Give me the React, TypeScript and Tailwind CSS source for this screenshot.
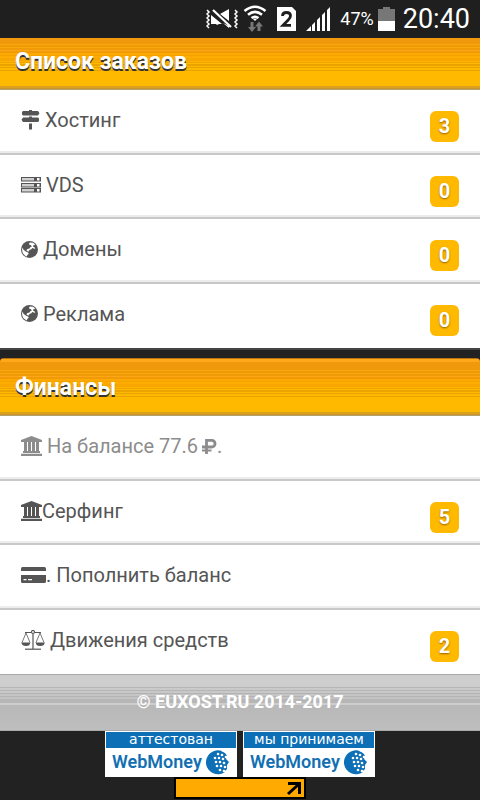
import React from "react";

interface IMenuItem {
    label: string;
    icon: React.ReactNode;
    count?: number;
    muted?: boolean;
    tight?: boolean;
    sign?: boolean;
}

const SignsIcon = () => (
    <svg width="19" height="20" viewBox="0 0 19 20" fill="currentColor">
        <path d="M8 0h3v1h6l1.500 2.200L17 5.500H2L1 4.500V2l1-1h6zM8 6.500h3v1h6l1 1V11l-1 1H2L.5 9.700 2 7.500h6zM8 13.500h3v6H8z" />
    </svg>
);

const ServerIcon = () => (
    <svg width="20" height="16" viewBox="0 0 20 16">
        {[0, 6, 11].map((y) => (
            <g key={y}>
                <rect x="0" y={y} width="20" height="4.500" fill="#555" />
                <rect x="1" y={y + 1} width="12" height="2.500" fill="#d0d0d0" />
                <rect x="16" y={y + 1} width="2.500" height="2.500" fill="#fff" />
            </g>
        ))}
    </svg>
);

const GlobeIcon = () => (
    <svg width="17" height="17" viewBox="0 0 17 17">
        <circle cx="8.500" cy="8.500" r="8.500" fill="#555" />
        <path
            d="M8.500 1.500l3.500.3 2.500 2-1.800.2-.7 1.500 1.500.8.800 1.700-1.500-.5-1.500-.5-1 1.300-1.800.7-1 1.500-1.200-.3-.8-1.200 1-1 2-.5L9.500 6l1.500-.8L9.500 4 8 3.500zM1.300 6.500l1.500 2.500 2 1.500 2.200 1 .8 1.200-1.500 1.300-.5 1.500Q1.200 13.500 1.100 9z"
            fill="#fff"
        />
    </svg>
);

const BankIcon = () => (
    <svg width="21" height="20" viewBox="0 0 21 20" fill="currentColor">
        <path d="M10.500 0L21 4v2H0V4zM3 6h3v9H3zM7 6h3v9H7zM11 6h3v9h-3zM15 6h3v9h-3zM2 15h17v2H2zM0 17.800h21V20H0z" />
    </svg>
);

const RubleIcon = () => (
    <svg width="15" height="15" viewBox="0 0 15 15" fill="none" stroke="currentColor">
        <path d="M4.500 15V1.300h5.200a3.300 3.300 0 0 1 0 6.700H0" strokeWidth="2.800" />
        <path d="M0 11.500h9.500" strokeWidth="2" />
    </svg>
);

const CardIcon = () => (
    <svg width="25" height="16" viewBox="0 0 25 16" fill="currentColor">
        <path d="M1.500 0h22Q25 0 25 1.500V4H0V1.500Q0 0 1.500 0z" />
        <path
            fillRule="evenodd"
            d="M0 8h25v6.500Q25 16 23.500 16h-22Q0 16 0 14.500zM2.500 12v1.300h3V12zM7 12v1.300h4V12z"
        />
    </svg>
);

const ScaleIcon = () => (
    <svg
        width="24"
        height="20"
        viewBox="0 0 24 20"
        fill="none"
        stroke="currentColor"
        strokeWidth="1.200"
    >
        <path d="M4 2.500h6M14 2.500h6M12 4v15" />
        <circle cx="12" cy="2" r="1.500" />
        <path d="M5 3L1 12.500M5 3l4 9.500M19 3l-4 9.500M19 3l4 9.500" strokeWidth="0.800" />
        <path
            d="M.3 12.500h9Q9 16 5 16T.3 12.500zM14.700 12.500h9Q23.500 16 19.200 16T14.700 12.500z"
            fill="currentColor"
            stroke="none"
        />
        <path d="M4 19.200h16" />
    </svg>
);

const orders: IMenuItem[] = [
    { label: "Хостинг", icon: <SignsIcon />, count: 3 },
    { label: "VDS", icon: <ServerIcon />, count: 0 },
    { label: "Домены", icon: <GlobeIcon />, count: 0 },
    { label: "Реклама", icon: <GlobeIcon />, count: 0 },
];

const finances: IMenuItem[] = [
    { label: "На балансе 77.6", icon: <BankIcon />, muted: true, sign: true },
    { label: "Серфинг", icon: <BankIcon />, count: 5, tight: true },
    { label: ". Пополнить баланс", icon: <CardIcon />, tight: true },
    { label: "Движения средств", icon: <ScaleIcon />, count: 2 },
];

const StatusBar = () => (
    <div className="flex h-[38px] items-center justify-end bg-[#1f1f1f] pr-2.5 text-white">
        <svg className="mr-1" width="33" height="22" viewBox="0 0 33 22" fill="none" stroke="#fff">
            <path
                d="M1 2l2 2-2 2 2 2-2 2 2 2-2 2 2 2-2 2 2 2M29 2l2 2-2 2 2 2-2 2 2 2-2 2 2 2-2 2 2 2"
                strokeWidth="1.500"
            />
            <path d="M5 7l11 9h-3l-2 1-1-1H5zM14 6l9-5v12z" fill="#fff" stroke="none" />
            <path d="M7 3l18 17" stroke="#1f1f1f" strokeWidth="5" />
            <path d="M5 6v10h5L5 10zM17 15l6 5v-2z" fill="#fff" stroke="none" />
            <path d="M7 2l18 17" strokeWidth="2.200" />
        </svg>
        <svg className="mr-2.5" width="24" height="28" viewBox="0 0 24 28" fill="none" stroke="#fff" strokeWidth="2.500">
            <path d="M1.500 6Q12-2.500 22.500 6M5 9.700Q12 4 19 9.700M8.500 13Q12 10.500 15.500 13" />
            <path d="M9.500 13.500L12 16l2.500-2.500z" fill="#fff" stroke="none" />
            <path d="M7.500 17h3v5H13l-4 5-4-5h2.500zM14.500 26h3v-4.500H20l-4-5-4 5h2.500z" fill="#777" stroke="none" />
        </svg>
        <svg className="mr-2.5" width="19" height="24" viewBox="0 0 19 24">
            <path d="M0 0h15l4 4v20H0z" fill="#fff" />
            <path d="M5.500 9q0-3.500 4-3.500t4 3.300q0 2-2.300 4.200L6 18.300h8" fill="none" stroke="#1f1f1f" strokeWidth="2.800" />
        </svg>
        <svg className="mr-2.5" width="24" height="24" viewBox="0 0 24 24" fill="#fff">
            <path d="M0 24l5-5v5zM6 24v-6l3-3v9zM11 24V13l3-3v14zM16 24V8l3-3v19zM21 24V3l3-3v24z" />
        </svg>
        <span className="mr-1 text-lg leading-6">47%</span>
        <svg className="mr-2" width="17" height="24" viewBox="0 0 17 24">
            <path d="M5 0h7v2h5v12H0V2h5z" fill="#777" />
            <path d="M0 14h17v10H0z" fill="#fff" />
        </svg>
        <span className="text-[27px] leading-8">20:40</span>
    </div>
);

const SectionTitle = ({ title, className }: { title: string; className: string }) => (
    <h2
        className={`flex items-end bg-[linear-gradient(to_top,#b9a06a_0_1px,#c9972a_1px_2px,#dba01c_2px_4px,#ffba00_4px_19px,#eba300_19px_20px,#ffb800_20px_22px,#eba300_22px_23px,#ffb800_23px_24px,#eba300_24px_26px,#ffb900_26px_27px,#efa500_27px_28px,#ffb200_28px_29px,#f7a700_29px_32px,#ffac00_32px_34px,#f4a400_34px_35px,#fda900_35px_37px,#f09a08_37px_39px,#ffa616_39px_40px,#f09a08_40px_42px,#f8a80c_42px_43px,#f09a08_43px_45px,#f3a80c_45px_46px,#f0990c_46px_54px,#ffa91a_54px_57px,#b97410_57px_58px)] px-[15px] pb-[13px] text-[23px] leading-[30px] font-bold text-white [text-shadow:0_2px_0_#333] ${className}`}
    >
        {title}
    </h2>
);

const MenuList = ({ items }: { items: IMenuItem[] }) => (
    <ul className="grid min-h-[258px] auto-rows-fr bg-white">
        {items.map(({ label, icon, count, muted, tight, sign }, index) => (
            <li
                key={label}
                className={
                    index < items.length - 1
                        ? "border-b-2 border-[#c8c8c8] shadow-[inset_0_-2px_#ececec]"
                        : ""
                }
            >
                <a
                    href="#"
                    className={`flex items-start justify-between px-[21px] text-xl ${muted ? "text-[#8c8c8c]" : "text-[#555]"}`}
                >
                    <span className="flex items-center pt-[15px] leading-[30px]">
                        {icon}
                        <span className={tight ? "" : "ml-[5px]"}>{label}</span>
                        {sign && (
                            <span className="ml-1 flex items-center">
                                <RubleIcon />.
                            </span>
                        )}
                    </span>
                    {count !== undefined && (
                        <span className="mt-[21px] h-[31px] w-[29px] rounded-md bg-[#ffba00] text-center leading-[31px] font-bold text-white [text-shadow:0_1px_2px_#996000]">
                            {count}
                        </span>
                    )}
                </a>
            </li>
        ))}
    </ul>
);

const WebMoneyBanner = ({ caption }: { caption: string }) => (
    <a href="#" className="flex h-[46px] w-[132px] flex-col bg-white p-px text-[#1270b2]">
        <span className="h-4 bg-[#0d6fb5] text-center font-['DejaVu_Sans',sans-serif] text-sm leading-[14px] text-white">
            {caption}
        </span>
        <span className="flex flex-1 items-center justify-between pr-1.5 pl-[6px]">
            <span className="text-lg leading-6 font-semibold">WebMoney</span>
            <svg width="25" height="25" viewBox="0 0 25 25">
                <path d="M17 1A12 12 0 1 0 20 22Q11 21 9.500 14T17 1z" fill="#0d6fb5" />
                <path d="M13 1Q20 1 22 6l-1 3 3 3-2 3v4q-3 4-9 4Q6 18 8 10T13 1z" fill="#0d6fb5" />
                <g fill="#fff">
                    {[
                        [13, 4], [17, 5], [21, 7], [10, 8], [14, 8], [18, 9], [11, 12], [15, 12],
                        [19, 13], [12, 16], [16, 16], [20, 17], [15, 20], [19, 21],
                    ].map(([x, y]) => (
                        <circle key={`${x}-${y}`} cx={x} cy={y} r="1.300" />
                    ))}
                </g>
            </svg>
        </span>
    </a>
);

const App = () => {
    return (
        <div className="min-h-screen bg-[#222] font-[Roboto,sans-serif]">
            <StatusBar />

            <main>
                <section>
                    <SectionTitle title="Список заказов" className="h-[52px]" />
                    <MenuList items={orders} />
                </section>

                <section className="border-t-2 border-[#444] pt-2">
                    <SectionTitle title="Финансы" className="h-[58px] rounded-t" />
                    <MenuList items={finances} />
                </section>
            </main>

            <footer>
                <p className="h-[57px] border-y border-[#aaa] bg-[linear-gradient(#cecece_0_12px,#b5b5b5_12px_13px,#cacaca_13px_15px,#b5b5b5_15px_16px,#c8c8c8_16px_18px,#b3b3b3_18px_19px,#c5c5c5_19px_21px,#b3b3b3_21px_22px,#c3c3c3_22px_24px,#b6b6b6_24px_28px,#cdcdcd_28px_30px,#b8b8b8_30px,#bebebe)] text-center text-lg leading-[54px] font-bold text-white">
                    © EUXOST.RU 2014-2017
                </p>
                <div className="flex flex-wrap justify-center gap-x-1.5">
                    <WebMoneyBanner caption="аттестован" />
                    <WebMoneyBanner caption="мы принимаем" />
                </div>
                <a
                    href="#"
                    aria-label="Статистика"
                    className="mx-auto flex h-[22px] w-[132px] items-center justify-end border-2 border-black bg-[#ffaa00] pr-0.5"
                >
                    <svg width="16" height="15" viewBox="0 0 16 15" fill="none" stroke="#000" strokeWidth="3">
                        <path d="M2 2.500h11.500V13M2 13L13 3" />
                    </svg>
                </a>
            </footer>
        </div>
    );
};

export default App;
